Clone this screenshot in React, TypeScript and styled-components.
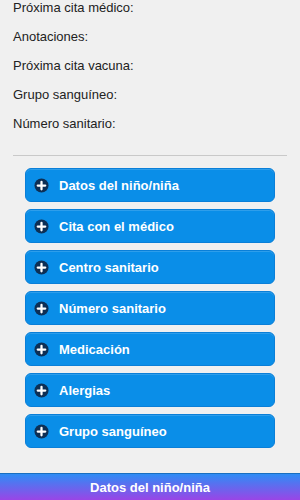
import styled, { createGlobalStyle } from 'styled-components';

const GlobalStyle = createGlobalStyle`
    html, body {
        margin: 0;
        padding: 0;
        background: #f0f0f0;
        font-family: 'Liberation Sans', Arial, sans-serif;
    }
`;

const infoLabels = [
    'Próxima cita médico:',
    'Anotaciones:',
    'Próxima cita vacuna:',
    'Grupo sanguíneo:',
    'Número sanitario:',
];

const sections = [
    'Datos del niño/niña',
    'Cita con el médico',
    'Centro sanitario',
    'Número sanitario',
    'Medicación',
    'Alergias',
    'Grupo sanguíneo',
];

function PlusIcon() {
    return (
        <svg width='15' height='15' viewBox='0 0 16 16'>
            <circle cx='8' cy='8' r='7.5' fill='#0d2f55' />
            <path d='M8 4v8M4 8h8' stroke='#fff' strokeWidth='2.4' strokeLinecap='round' />
        </svg>
    );
}

function App() {
    return (
        <Page>
            <GlobalStyle />
            <InfoList>
                {infoLabels.map((label) => (
                    <InfoRow key={label}>{label}</InfoRow>
                ))}
            </InfoList>

            <Divider />

            <SectionList>
                {sections.map((title) => (
                    <SectionButton key={title}>
                        <PlusIcon />
                        <span>{title}</span>
                    </SectionButton>
                ))}
            </SectionList>

            <BottomBar>Datos del niño/niña</BottomBar>
        </Page>
    );
}

export default App;

const Page = styled.div`
    width: 300px;
    height: 500px;
    display: flex;
    flex-direction: column;
    background: #f0f0f0;
    overflow: hidden;
`;

const InfoList = styled.div`
    display: flex;
    flex-direction: column;
    gap: 13px;
    padding: 0 13px;
`;

const InfoRow = styled.div`
    font-size: 13px;
    line-height: 16px;
    color: #222;
`;

const Divider = styled.hr`
    border: none;
    border-top: 1px solid #c9c9c9;
    margin: 23px 13px 12px 13px;
`;

const SectionList = styled.div`
    display: flex;
    flex-direction: column;
    gap: 7px;
    padding: 0 25px;
`;

const SectionButton = styled.button`
    height: 34px;
    display: flex;
    align-items: center;
    gap: 10px;
    padding: 0 0 0 8px;
    border: 1px solid #0a7fd8;
    border-radius: 6px;
    background: #0a8ee8;
    color: #fff;
    font-family: 'Liberation Sans', Arial, sans-serif;
    font-size: 13px;
    font-weight: bold;
    text-align: left;
    box-shadow: inset 0 1px 0 rgba(255, 255, 255, 0.15);
    cursor: pointer;
`;

const BottomBar = styled.div`
    margin-top: auto;
    height: 26px;
    display: flex;
    align-items: center;
    justify-content: center;
    border-top: 1px solid #1a6fc0;
    background: linear-gradient(to bottom, #2f8cf5, #9a45e6);
    color: #fff;
    font-size: 13px;
    font-weight: bold;
`;
